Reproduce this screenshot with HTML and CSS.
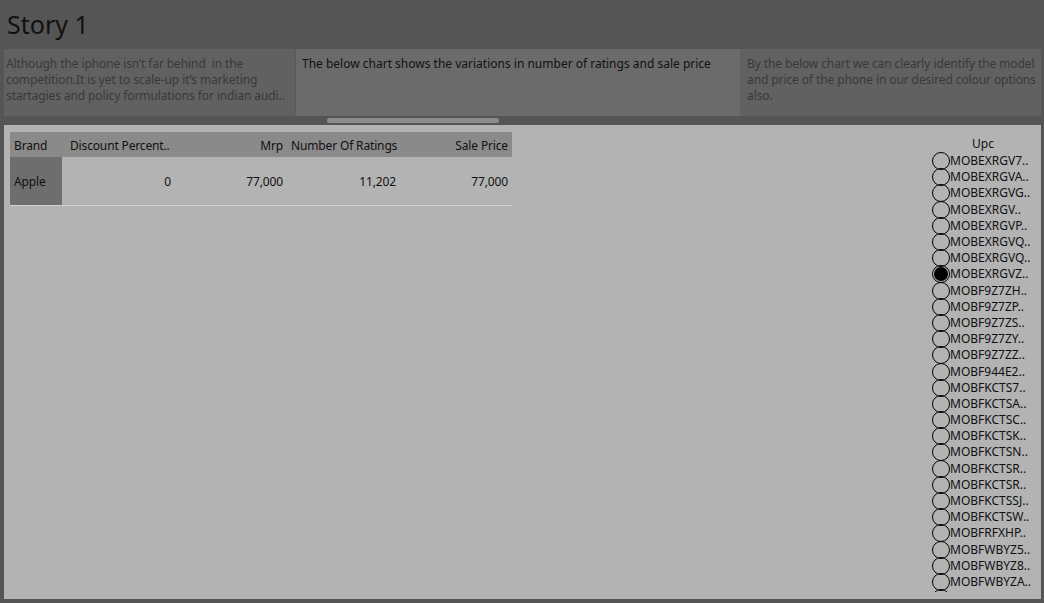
FILE: index.html
```html
<!DOCTYPE html>
<html>
<head>
<meta charset="utf-8">
<link rel="stylesheet" href="styles.css">
</head>
<body>
<div class="page">
  <header class="title">Story 1</header>
  <nav class="points">
    <div class="point dim">Although the iphone isn’t far behind&nbsp; in the competition.It is yet to scale-up it’s marketing startagies and policy formulations for indian audi..</div>
    <div class="point active">The below chart shows the variations in number of ratings and sale price</div>
    <div class="point dim">By the below chart we can clearly identify the model and price of the phone in our desired colour options also.</div>
  </nav>
  <div class="scroll"><div class="thumb"></div></div>
  <main class="panel">
    <div class="table">
      <div class="hrow">
        <div class="c c1">Brand</div>
        <div class="c c2">Discount Percent..</div>
        <div class="c c3 r">Mrp</div>
        <div class="c c4 r">Number Of Ratings</div>
        <div class="c c5 r">Sale Price</div>
      </div>
      <div class="drow">
        <div class="c c1 brand">Apple</div>
        <div class="c c2 r">0</div>
        <div class="c c3 r">77,000</div>
        <div class="c c4 r">11,202</div>
        <div class="c c5 r">77,000</div>
      </div>
    </div>
    <aside class="legend">
      <div class="ltitle">Upc</div>
      <ul class="items">
        <li><span class="dot"></span>MOBEXRGV7..</li>
        <li><span class="dot"></span>MOBEXRGVA..</li>
        <li><span class="dot"></span>MOBEXRGVG..</li>
        <li><span class="dot"></span>MOBEXRGV..</li>
        <li><span class="dot"></span>MOBEXRGVP..</li>
        <li><span class="dot"></span>MOBEXRGVQ..</li>
        <li><span class="dot"></span>MOBEXRGVQ..</li>
        <li><span class="dot on"></span>MOBEXRGVZ..</li>
        <li><span class="dot"></span>MOBF9Z7ZH..</li>
        <li><span class="dot"></span>MOBF9Z7ZP..</li>
        <li><span class="dot"></span>MOBF9Z7ZS..</li>
        <li><span class="dot"></span>MOBF9Z7ZY..</li>
        <li><span class="dot"></span>MOBF9Z7ZZ..</li>
        <li><span class="dot"></span>MOBF944E2..</li>
        <li><span class="dot"></span>MOBFKCTS7..</li>
        <li><span class="dot"></span>MOBFKCTSA..</li>
        <li><span class="dot"></span>MOBFKCTSC..</li>
        <li><span class="dot"></span>MOBFKCTSK..</li>
        <li><span class="dot"></span>MOBFKCTSN..</li>
        <li><span class="dot"></span>MOBFKCTSR..</li>
        <li><span class="dot"></span>MOBFKCTSR..</li>
        <li><span class="dot"></span>MOBFKCTSSJ..</li>
        <li><span class="dot"></span>MOBFKCTSW..</li>
        <li><span class="dot"></span>MOBFRFXHP..</li>
        <li><span class="dot"></span>MOBFWBYZ5..</li>
        <li><span class="dot"></span>MOBFWBYZ8..</li>
        <li><span class="dot"></span>MOBFWBYZA..</li>
        <li><span class="dot"></span></li>
      </ul>
    </aside>
  </main>
</div>
</body>
</html>
```

FILE: styles.css
```css
* { box-sizing: border-box; }
html, body { margin: 0; padding: 0; }
body {
  background: #555555;
  font-family: "Noto Sans", "DejaVu Sans", sans-serif;
  width: 1044px;
  height: 603px;
  overflow: hidden;
}
.page {
  display: flex;
  flex-direction: column;
  height: 603px;
}
.title {
  height: 49px;
  padding: 6px 0 0 7px;
  font-size: 25px;
  line-height: 36px;
  color: #111111;
}
.points {
  display: flex;
  height: 67px;
  margin: 0 3px 0 4px;
}
.point {
  font-size: 12px;
  line-height: 16px;
  letter-spacing: -0.1px;
  padding: 7px 1px 0 2px;
  overflow: hidden;
}
.point.dim {
  background: #616161;
  color: #393939;
}
.point:nth-child(1) { width: 291px; }
.point.active {
  width: 445px;
  background: #6b6b6b;
  color: #121212;
  letter-spacing: 0;
  padding-left: 6px;
  border-left: 1px solid #5a5a5a;
}
.point:nth-child(3) { flex: 1; padding-left: 7px; }
.scroll {
  height: 9px;
  padding: 2px 0 0 327px;
}
.thumb {
  width: 172px;
  height: 5px;
  border-radius: 3px;
  background: #8c8c8c;
}
.panel {
  display: flex;
  justify-content: space-between;
  height: 474px;
  margin: 0 3px 0 4px;
  background: #b3b3b3;
  padding: 7px 6px 0 6px;
  overflow: hidden;
}
.table {
  width: 502px;
  font-size: 12px;
  letter-spacing: -0.15px;
  color: #111111;
}
.hrow, .drow {
  display: grid;
  grid-template-columns: 52px 113px 112px 113px 112px;
}
.hrow {
  height: 25px;
  line-height: 27px;
  background: #8a8a8a;
}
.drow {
  height: 49px;
  line-height: 50px;
  border-bottom: 1px solid #d2d2d2;
}
.c {
  padding: 0 4px;
  white-space: nowrap;
  overflow: hidden;
}
.c1 { padding-left: 4px; }
.hrow .c2 { padding-left: 8px; }
.r { text-align: right; }
.brand { background: #6e6e6e; }
.legend {
  width: 104px;
  height: 460px;
  overflow: hidden;
  font-size: 12px;
  color: #111111;
}
.ltitle {
  text-align: center;
  padding: 3px 0 0 0;
  line-height: 18px;
  height: 21px;
}
.items {
  list-style: none;
  margin: 0;
  padding: 0;
}
.items li {
  display: flex;
  align-items: center;
  height: 16.2px;
  line-height: 16px;
  white-space: nowrap;
}
.dot {
  flex: none;
  width: 18px;
  height: 18px;
  margin: -1px 0 -1px 1px;
  border: 1.3px solid #000;
  border-radius: 50%;
  position: relative;
}
.dot.on::after {
  content: "";
  position: absolute;
  left: 1px;
  top: 1px;
  right: 1px;
  bottom: 1px;
  border-radius: 50%;
  background: #000;
}
```
